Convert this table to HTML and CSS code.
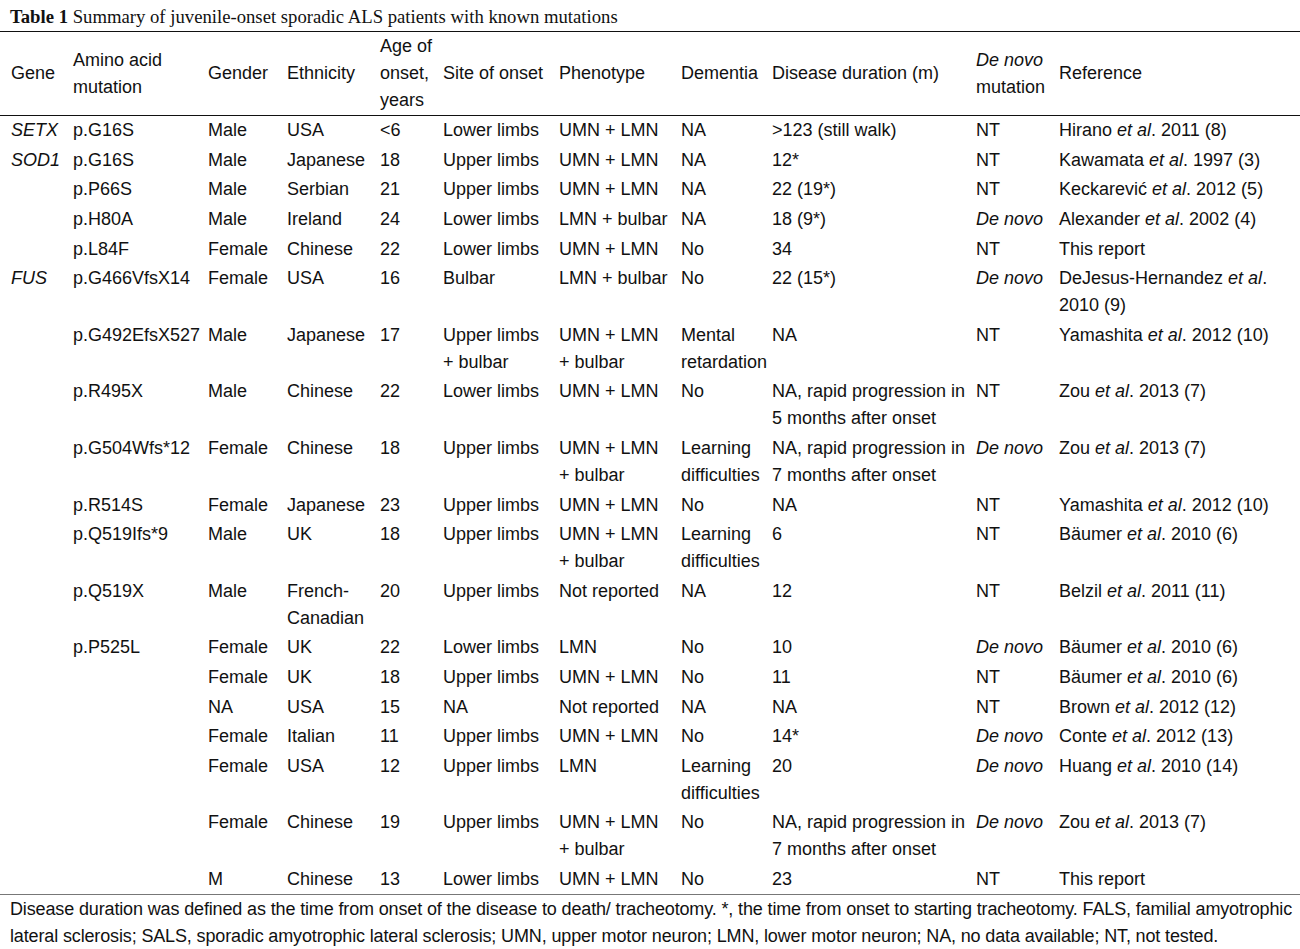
FILE: index.html
```html
<!DOCTYPE html>
<html>
<head>
<meta charset="utf-8">
<link rel="stylesheet" href="styles.css">
</head>
<body>
<div class="caption"><b>Table 1</b> Summary of juvenile-onset sporadic ALS patients with known mutations</div>
<table class="tbl">
<colgroup>
<col class="c1"><col class="c2"><col class="c3"><col class="c4"><col class="c5"><col class="c6"><col class="c7"><col class="c8"><col class="c9"><col class="c10"><col class="c11">
</colgroup>
<thead>
<tr>
<th>Gene</th>
<th>Amino acid<br>mutation</th>
<th>Gender</th>
<th>Ethnicity</th>
<th>Age of<br>onset,<br>years</th>
<th>Site of onset</th>
<th>Phenotype</th>
<th>Dementia</th>
<th>Disease duration (m)</th>
<th><i>De novo</i><br>mutation</th>
<th>Reference</th>
</tr>
</thead>
<tbody>
<tr><td><i>SETX</i></td><td>p.G16S</td><td>Male</td><td>USA</td><td>&lt;6</td><td>Lower limbs</td><td>UMN + LMN</td><td>NA</td><td>&gt;123 (still walk)</td><td>NT</td><td>Hirano <i>et al</i>. 2011 (8)</td></tr>
<tr><td><i>SOD1</i></td><td>p.G16S</td><td>Male</td><td>Japanese</td><td>18</td><td>Upper limbs</td><td>UMN + LMN</td><td>NA</td><td>12*</td><td>NT</td><td>Kawamata <i>et al</i>. 1997 (3)</td></tr>
<tr><td></td><td>p.P66S</td><td>Male</td><td>Serbian</td><td>21</td><td>Upper limbs</td><td>UMN + LMN</td><td>NA</td><td>22 (19*)</td><td>NT</td><td>Keckarević <i>et al</i>. 2012 (5)</td></tr>
<tr><td></td><td>p.H80A</td><td>Male</td><td>Ireland</td><td>24</td><td>Lower limbs</td><td>LMN + bulbar</td><td>NA</td><td>18 (9*)</td><td><i>De novo</i></td><td>Alexander <i>et al</i>. 2002 (4)</td></tr>
<tr><td></td><td>p.L84F</td><td>Female</td><td>Chinese</td><td>22</td><td>Lower limbs</td><td>UMN + LMN</td><td>No</td><td>34</td><td>NT</td><td>This report</td></tr>
<tr><td><i>FUS</i></td><td>p.G466VfsX14</td><td>Female</td><td>USA</td><td>16</td><td>Bulbar</td><td>LMN + bulbar</td><td>No</td><td>22 (15*)</td><td><i>De novo</i></td><td>DeJesus-Hernandez <i>et al</i>.<br>2010 (9)</td></tr>
<tr><td></td><td>p.G492EfsX527</td><td>Male</td><td>Japanese</td><td>17</td><td>Upper limbs<br>+ bulbar</td><td>UMN + LMN<br>+ bulbar</td><td>Mental<br>retardation</td><td>NA</td><td>NT</td><td>Yamashita <i>et al</i>. 2012 (10)</td></tr>
<tr><td></td><td>p.R495X</td><td>Male</td><td>Chinese</td><td>22</td><td>Lower limbs</td><td>UMN + LMN</td><td>No</td><td>NA, rapid progression in<br>5 months after onset</td><td>NT</td><td>Zou <i>et al</i>. 2013 (7)</td></tr>
<tr><td></td><td>p.G504Wfs*12</td><td>Female</td><td>Chinese</td><td>18</td><td>Upper limbs</td><td>UMN + LMN<br>+ bulbar</td><td>Learning<br>difficulties</td><td>NA, rapid progression in<br>7 months after onset</td><td><i>De novo</i></td><td>Zou <i>et al</i>. 2013 (7)</td></tr>
<tr><td></td><td>p.R514S</td><td>Female</td><td>Japanese</td><td>23</td><td>Upper limbs</td><td>UMN + LMN</td><td>No</td><td>NA</td><td>NT</td><td>Yamashita <i>et al</i>. 2012 (10)</td></tr>
<tr><td></td><td>p.Q519Ifs*9</td><td>Male</td><td>UK</td><td>18</td><td>Upper limbs</td><td>UMN + LMN<br>+ bulbar</td><td>Learning<br>difficulties</td><td>6</td><td>NT</td><td>Bäumer <i>et al</i>. 2010 (6)</td></tr>
<tr><td></td><td>p.Q519X</td><td>Male</td><td>French-<br>Canadian</td><td>20</td><td>Upper limbs</td><td>Not reported</td><td>NA</td><td>12</td><td>NT</td><td>Belzil <i>et al</i>. 2011 (11)</td></tr>
<tr><td></td><td>p.P525L</td><td>Female</td><td>UK</td><td>22</td><td>Lower limbs</td><td>LMN</td><td>No</td><td>10</td><td><i>De novo</i></td><td>Bäumer <i>et al</i>. 2010 (6)</td></tr>
<tr><td></td><td></td><td>Female</td><td>UK</td><td>18</td><td>Upper limbs</td><td>UMN + LMN</td><td>No</td><td>11</td><td>NT</td><td>Bäumer <i>et al</i>. 2010 (6)</td></tr>
<tr><td></td><td></td><td>NA</td><td>USA</td><td>15</td><td>NA</td><td>Not reported</td><td>NA</td><td>NA</td><td>NT</td><td>Brown <i>et al</i>. 2012 (12)</td></tr>
<tr><td></td><td></td><td>Female</td><td>Italian</td><td>11</td><td>Upper limbs</td><td>UMN + LMN</td><td>No</td><td>14*</td><td><i>De novo</i></td><td>Conte <i>et al</i>. 2012 (13)</td></tr>
<tr><td></td><td></td><td>Female</td><td>USA</td><td>12</td><td>Upper limbs</td><td>LMN</td><td>Learning<br>difficulties</td><td>20</td><td><i>De novo</i></td><td>Huang <i>et al</i>. 2010 (14)</td></tr>
<tr><td></td><td></td><td>Female</td><td>Chinese</td><td>19</td><td>Upper limbs</td><td>UMN + LMN<br>+ bulbar</td><td>No</td><td>NA, rapid progression in<br>7 months after onset</td><td><i>De novo</i></td><td>Zou <i>et al</i>. 2013 (7)</td></tr>
<tr><td></td><td></td><td>M</td><td>Chinese</td><td>13</td><td>Lower limbs</td><td>UMN + LMN</td><td>No</td><td>23</td><td>NT</td><td>This report</td></tr>
</tbody>
</table>
<p class="note">Disease duration was defined as the time from onset of the disease to death/ tracheotomy. *, the time from onset to starting tracheotomy. FALS, familial amyotrophic<br>lateral sclerosis; SALS, sporadic amyotrophic lateral sclerosis; UMN, upper motor neuron; LMN, lower motor neuron; NA, no data available; NT, not tested.</p>
</body>
</html>
```

FILE: styles.css
```css
html, body {
  margin: 0;
  padding: 0;
  background: #ffffff;
}

body {
  width: 1300px;
  color: #111111;
  font-family: "Liberation Sans", Arial, sans-serif;
  font-size: 18px;
}

.caption {
  box-sizing: border-box;
  height: 31px;
  padding: 5px 0 0 10px;
  font-family: "Liberation Serif", "Times New Roman", serif;
  font-size: 18.7px;
  line-height: 23px;
  white-space: nowrap;
}

.caption b {
  font-weight: bold;
}

.tbl {
  width: 1300px;
  border-collapse: collapse;
  table-layout: fixed;
  border-top: 1px solid #111111;
  border-bottom: 1px solid #777777;
}

.c1 { width: 73px; }
.c2 { width: 135px; }
.c3 { width: 79px; }
.c4 { width: 93px; }
.c5 { width: 63px; }
.c6 { width: 116px; }
.c7 { width: 122px; }
.c8 { width: 91px; }
.c9 { width: 204px; }
.c10 { width: 83px; }
.c11 { width: 241px; }

.tbl th,
.tbl td {
  padding: 1.3px 0 1.3px 0;
  text-align: left;
  line-height: 27px;
  font-weight: normal;
  white-space: nowrap;
  overflow: visible;
}

.tbl th {
  vertical-align: middle;
  padding-top: 1px;
  padding-bottom: 1px;
  border-bottom: 1px solid #111111;
}

.tbl td {
  vertical-align: top;
}

.tbl th:first-child,
.tbl td:first-child {
  padding-left: 11px;
}

.note {
  margin: 0;
  padding: 1px 0 0 10px;
  line-height: 27px;
  white-space: nowrap;
  letter-spacing: -0.14px;
}
```
